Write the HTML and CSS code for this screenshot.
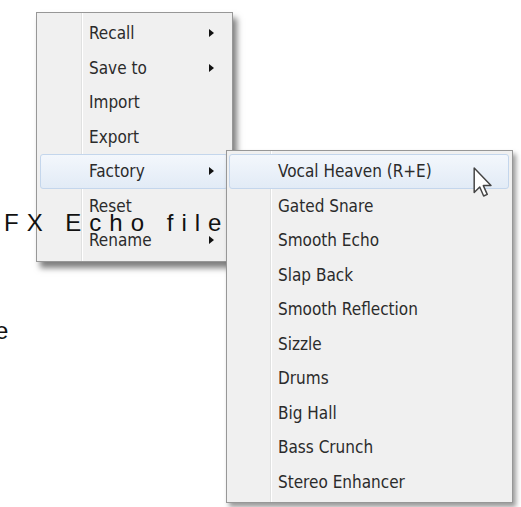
FILE: index.html
```html
<!DOCTYPE html>
<html lang="en">
<head>
    <meta charset="UTF-8">
    <meta name="viewport" content="width=device-width, initial-scale=1.0">
    <title>FX Echo presets</title>
    <link rel="stylesheet" href="styles.css">
</head>
<body>
    <div class="page">
        <div class="doc">
            <p class="doc-line">FX Echo file</p>
            <p class="doc-line cut">e</p>
        </div>

        <div class="menu main-menu">
            <div class="item">Recall<span class="arrow"></span></div>
            <div class="item">Save to<span class="arrow"></span></div>
            <div class="item">Import</div>
            <div class="item">Export</div>
            <div class="item active">Factory<span class="arrow"></span></div>
            <div class="item">Reset</div>
            <div class="item">Rename<span class="arrow"></span></div>
        </div>

        <div class="menu sub-menu">
            <div class="item active">Vocal Heaven (R+E)</div>
            <div class="item">Gated Snare</div>
            <div class="item">Smooth Echo</div>
            <div class="item">Slap Back</div>
            <div class="item">Smooth Reflection</div>
            <div class="item">Sizzle</div>
            <div class="item">Drums</div>
            <div class="item">Big Hall</div>
            <div class="item">Bass Crunch</div>
            <div class="item">Stereo Enhancer</div>
        </div>

        <!-- mouse pointer resting on the first preset -->
        <svg class="cursor" width="20" height="31" viewBox="0 0 12 19">
            <path d="M0.6 0.6 L0.6 15.6 L4 12.3 L6.4 17.8 L8.6 16.8 L6.2 11.4 L10.9 11.4 Z" fill="#fff" stroke="#444" stroke-width="0.9" stroke-linejoin="round"/>
        </svg>
    </div>
</body>
</html>
```

FILE: styles.css
```css
body {
    margin: 0;
    background-color: #fff;
}
.page {
    position: relative;
    height: 507px;
    overflow: hidden;
}
.doc {
    position: relative;
    z-index: 5;
    padding: 209px 0 0 4px;
}
.doc-line {
    margin: 0;
    font-family: "Liberation Sans", Arial, sans-serif;
    font-size: 24px;
    line-height: 28px;
    letter-spacing: 8px;
    color: #111;
}
.cut {
    margin: 80px 0 0 -9px;
}
.menu {
    position: absolute;
    box-sizing: border-box;
    border: 1px solid #979797;
    background-color: #f0f0f0;
    font-family: "DejaVu Sans Condensed", "DejaVu Sans", sans-serif;
    font-stretch: condensed;
    font-size: 17px;
    color: #2b2b2b;
}
.main-menu {
    left: 36px;
    top: 12px;
    width: 197px;
    padding: 3px 4px 3px 3px;
    z-index: 1;
    box-shadow: 4px 6px 6px rgba(0, 0, 0, 0.5);
    background-image: linear-gradient(to right, transparent 44px, #e0e1e1 44px, #e0e1e1 45px, #fff 45px, #fff 46px, transparent 46px);
}
.sub-menu {
    left: 226px;
    top: 150px;
    width: 287px;
    padding: 3px 3px 3px 2px;
    z-index: 2;
    box-shadow: 3px 4px 5px rgba(0, 0, 0, 0.4);
    background-image: linear-gradient(to right, transparent 43px, #e0e1e1 43px, #e0e1e1 44px, #fff 44px, #fff 45px, transparent 45px);
}
.item {
    display: flex;
    align-items: center;
    box-sizing: border-box;
    height: 34.5px;
    padding-left: 48px;
    border: 1px solid transparent;
    border-radius: 3px;
}
.item.active {
    background: linear-gradient(#f3f7fc, #e2ebf6);
    border-color: #c4d6ec;
}
.arrow {
    margin-left: auto;
    margin-right: 13px;
    width: 0;
    height: 0;
    border-left: 5px solid #111;
    border-top: 4px solid transparent;
    border-bottom: 4px solid transparent;
}
.cursor {
    position: absolute;
    left: 473px;
    top: 167px;
    z-index: 6;
}
```
